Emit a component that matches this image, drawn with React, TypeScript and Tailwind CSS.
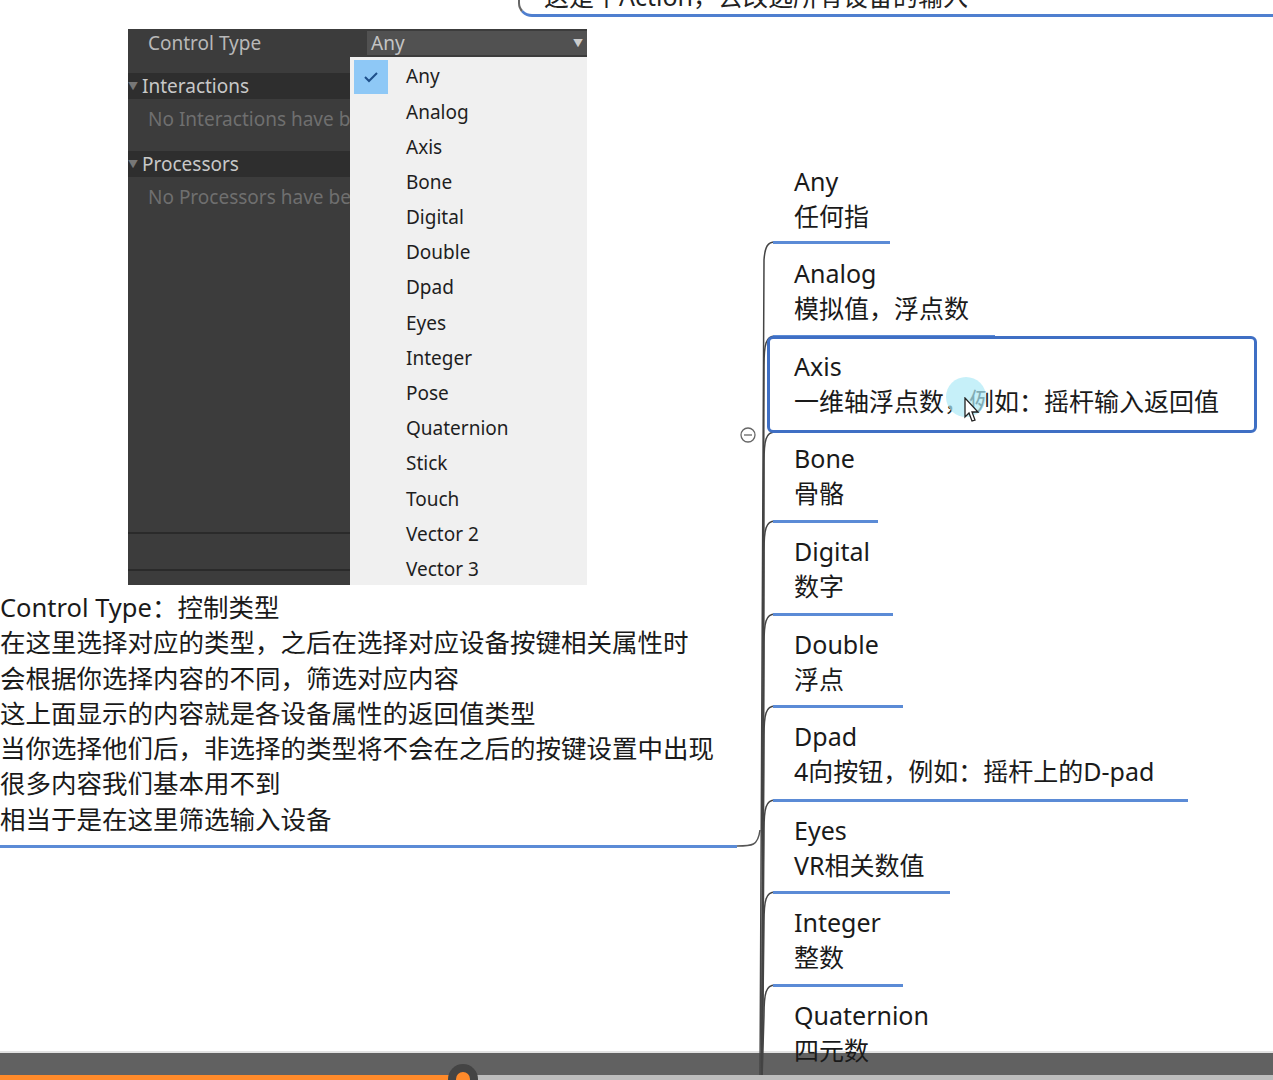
const font = { fontFamily: '"Noto Sans", "Noto Sans CJK SC", sans-serif' }

const menu = ['Any', 'Analog', 'Axis', 'Bone', 'Digital', 'Double', 'Dpad', 'Eyes', 'Integer', 'Pose', 'Quaternion', 'Stick', 'Touch', 'Vector 2', 'Vector 3']

const nodes = [
  { t: 'Any', s: '任何指', y: 164, line: 242, w: 890 },
  { t: 'Analog', s: '模拟值，浮点数', y: 256, line: 336, w: 995 },
  { t: 'Axis', s: '一维轴浮点数，例如：摇杆输入返回值', y: 349, line: 0, w: 0 },
  { t: 'Bone', s: '骨骼', y: 441, line: 521, w: 878 },
  { t: 'Digital', s: '数字', y: 534, line: 614, w: 893 },
  { t: 'Double', s: '浮点', y: 627, line: 706, w: 903 },
  { t: 'Dpad', s: '4向按钮，例如：摇杆上的D-pad', y: 719, line: 800, w: 1188 },
  { t: 'Eyes', s: 'VR相关数值', y: 813, line: 892, w: 950 },
  { t: 'Integer', s: '整数', y: 905, line: 985, w: 903 },
  { t: 'Quaternion', s: '四元数', y: 998, line: 0, w: 0 },
]

const desc = [
  'Control Type：控制类型',
  '在这里选择对应的类型，之后在选择对应设备按键相关属性时',
  '会根据你选择内容的不同，筛选对应内容',
  '这上面显示的内容就是各设备属性的返回值类型',
  '当你选择他们后，非选择的类型将不会在之后的按键设置中出现',
  '很多内容我们基本用不到',
  '相当于是在这里筛选输入设备',
]

export default function App() {
  return (
    <div className="relative w-[1273px] h-[1080px] overflow-hidden bg-white text-[#1a1a1a]" style={font}>
      {/* top cut-off node */}
      <div className="absolute left-[518px] top-[-30px] w-[800px] h-[47px] border-l-2 border-b-[3px] border-[#4f7fcf] rounded-bl-[14px] border-l-[#666]">
        <div className="pl-6 pt-[14px] text-[25px] leading-none text-[#222] whitespace-nowrap">这是个Action，去改选所有设备的输入</div>
      </div>

      {/* Unity panel */}
      <div className="absolute left-[128px] top-[29px] w-[459px] h-[556px] bg-[#3c3c3c] text-[19px]">
        <div className="flex h-[28px] items-center">
          <div className="w-[239px] pl-5 text-[#b8b8b8]">Control Type</div>
          <div className="flex-1 h-[24px] bg-[#515151] flex items-center justify-between px-1 text-[#c4c4c4]">
            <span>Any</span><span className="text-[10px] text-[#ccc]">▼</span>
          </div>
        </div>
        <div className="mt-[16px] h-[26px] bg-[#2e2e2e] w-[222px] flex items-center text-[#c8c8c8]"><span className="text-[10px] text-[#777] mr-1">▼</span>Interactions</div>
        <div className="h-[40px] pl-5 flex items-center text-[#6f6f6f] w-[222px] overflow-hidden whitespace-nowrap">No Interactions have b</div>
        <div className="mt-[12px] h-[26px] bg-[#2e2e2e] w-[222px] flex items-center text-[#c8c8c8]"><span className="text-[10px] text-[#777] mr-1">▼</span>Processors</div>
        <div className="h-[40px] pl-5 flex items-center text-[#6f6f6f] w-[222px] overflow-hidden whitespace-nowrap">No Processors have be</div>
        <div className="absolute left-0 top-[503px] w-[222px] h-[2px] bg-[#2a2a2a]" />
        <div className="absolute left-0 top-[540px] w-[222px] h-[2px] bg-[#2a2a2a]" />
        {/* dropdown */}
        <div className="absolute left-[222px] top-[28px] w-[237px] h-[528px] bg-[#f0f0f0] pt-[2px] text-[19px] text-[#1e1e1e]">
          {menu.map((m, i) => (
            <div key={m} className="flex h-[35.2px] items-center">
              <div className={`w-[34px] h-[34px] ml-[4px] flex items-center justify-center ${i === 0 ? 'bg-[#8ec8f6]' : ''}`}>
                {i === 0 && (
                  <svg width="16" height="12" viewBox="0 0 16 12"><path d="M2 6l4 4 8-8" fill="none" stroke="#1e4f8a" strokeWidth="2" /></svg>
                )}
              </div>
              <span className="ml-[18px]">{m}</span>
            </div>
          ))}
        </div>
      </div>

      {/* description */}
      <div className="absolute left-0 top-[590px] text-[25.5px] leading-[35.3px] text-[#1a1a1a] whitespace-nowrap">
        {desc.map((d) => <div key={d}>{d}</div>)}
      </div>
      <div className="absolute left-0 top-[845px] w-[737px] h-[3px] bg-[#5b8bd6]" />

      {/* video bar (text of the map is drawn over it) */}
      <div className="absolute left-0 top-[1053px] w-full h-[27px] bg-[#616161]" />
      <div className="absolute left-0 top-[1051px] w-full h-[2px] bg-[#e2e2e2]" />

      {/* connectors */}
      <svg className="absolute left-0 top-0" width="1273" height="1080">
        <path d="M737 846 C752 846 758 846 760 830" fill="none" stroke="#555" strokeWidth="1.5" />
        <path d="M760 1080 L764 260 C765 246 768 242 775 242" fill="none" stroke="#444" strokeWidth="1.5" />
        {[336, 432, 521, 614, 706, 800, 892, 985].map((y) => (
          <path key={y} d={`M775 ${y} C766 ${y} 764 ${y + 8} 764 ${y + 30} L762 1080`} fill="none" stroke="#444" strokeWidth="1.5" />
        ))}
        <circle cx="748" cy="435" r="7" fill="white" stroke="#666" strokeWidth="1.3" />
        <line x1="744" y1="435" x2="752" y2="435" stroke="#666" strokeWidth="1.3" />
      </svg>

      {/* mind map nodes */}
      {nodes.map((n) => (
        <div key={n.t} className="absolute left-[794px] text-[25px] leading-[35px] whitespace-nowrap" style={{ top: n.y }}>
          <div>{n.t}</div>
          <div>{n.s}</div>
        </div>
      ))}
      {nodes.filter((n) => n.line).map((n) => (
        <div key={n.t + 'l'} className="absolute left-[773px] h-[3px] bg-[#5b8bd6]" style={{ top: n.line - 1, width: n.w - 773 }} />
      ))}
      <div className="absolute left-[767px] top-[336px] w-[490px] h-[97px] border-[3px] border-[#3f6fc4] rounded-[6px]" />
      <div className="absolute left-[946px] top-[377px] w-[40px] h-[40px] rounded-full bg-[#aeeaf7] opacity-70" />
      <svg className="absolute left-[964px] top-[397px]" width="16" height="26" viewBox="0 0 16 26">
        <path d="M1 1 L1 20 L5 16 L8 24 L11 23 L8 15 L14 15 Z" fill="white" stroke="#222" strokeWidth="1.3" />
      </svg>

      <div className="absolute left-0 top-[1075px] w-full h-[5px] bg-[#bdbdbd]" />
      <div className="absolute left-0 top-[1075px] w-[462px] h-[5px] bg-[#ff8a2a]" />
      <div className="absolute left-[448px] top-[1064px] w-[30px] h-[30px] rounded-full bg-[#444] flex items-center justify-center">
        <div className="w-[14px] h-[14px] rounded-full bg-[#ff8a2a]" />
      </div>
    </div>
  )
}
